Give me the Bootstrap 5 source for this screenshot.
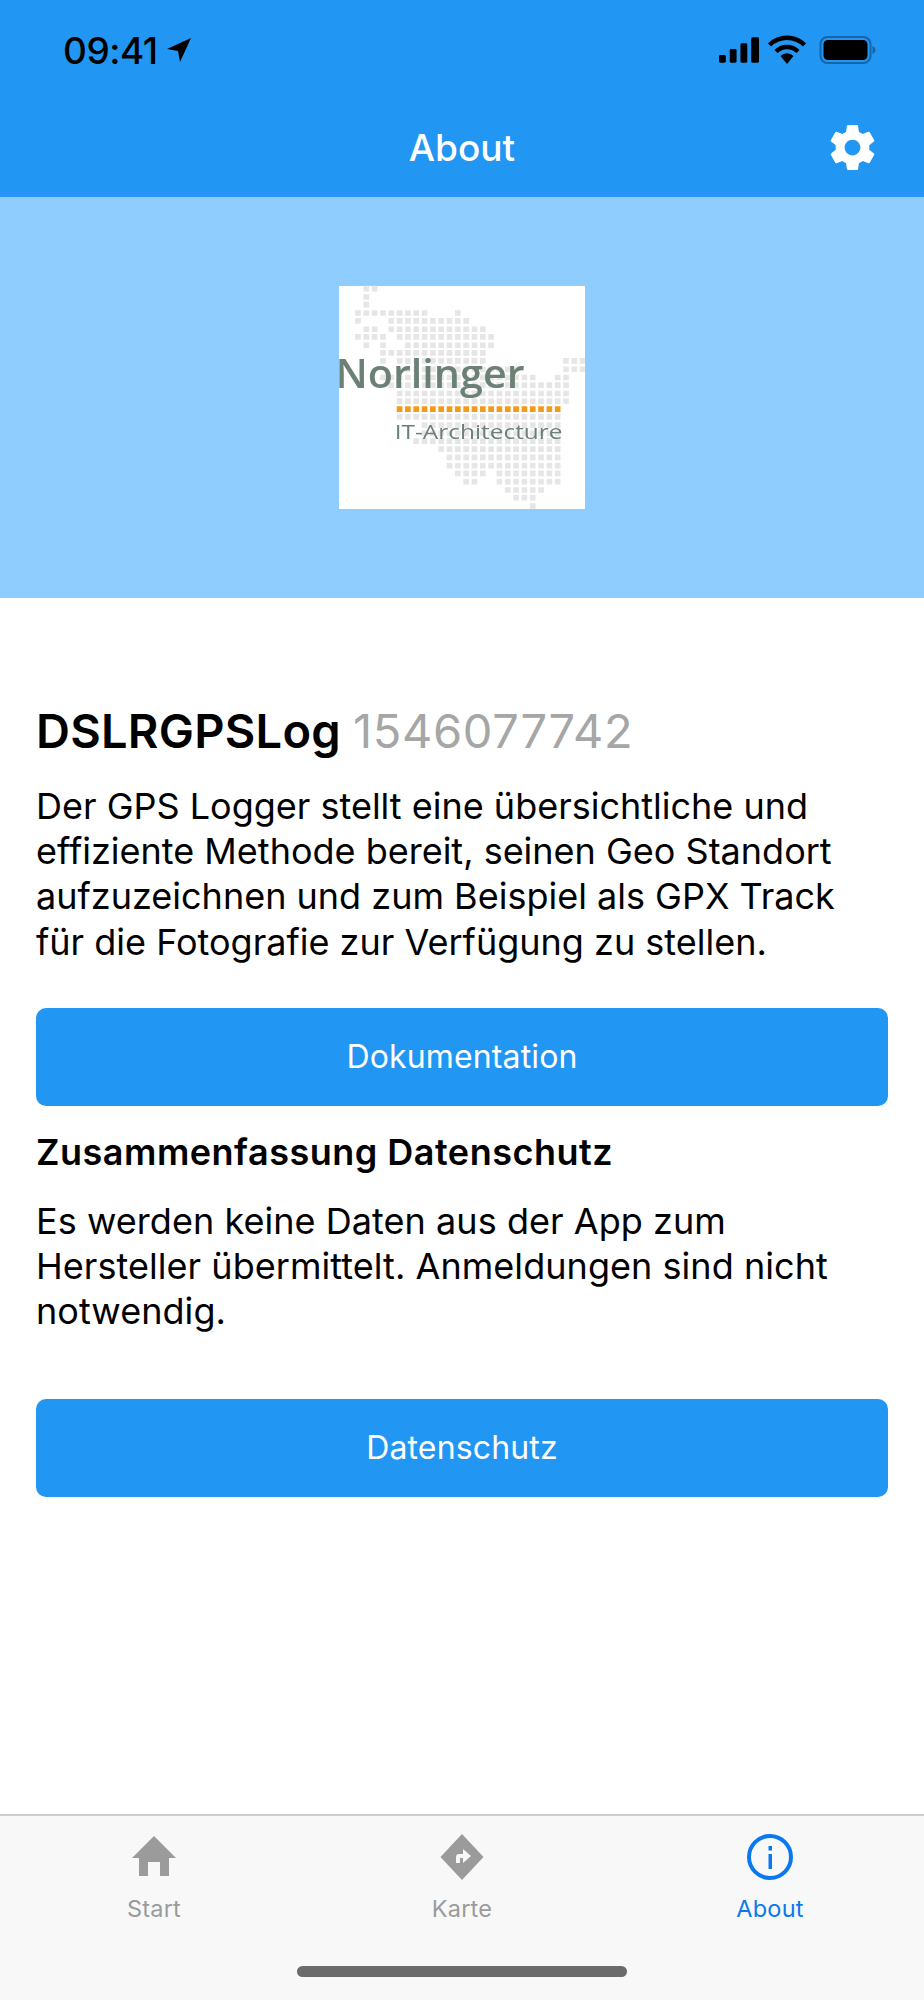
<!DOCTYPE html>
<html lang="de">
<head>
<meta charset="utf-8">
<title>About</title>
<link href="https://cdn.jsdelivr.net/npm/bootstrap@5.3.0/dist/css/bootstrap.min.css" rel="stylesheet">
<style>
html,body{height:100%}
body{font-family:Inter,"Liberation Sans",sans-serif;color:#000;background:#fff}
.app-head{background:#2196f3;height:197px;border-bottom:5px solid #2a94fb}
.status-row{height:97px;padding:3px 48px 0 63px}
.clock{font-size:37px;font-weight:500;letter-spacing:-.5px;line-height:1}
.head-row{height:95px;padding:5px 49px 0 49px}
.head-title{font-size:37px;font-weight:500;line-height:1;color:#fff}
.side-slot{width:45px}
.banner{background:#90cdff;height:401px}
.logo-box{width:246px;height:223px;background:#fff}
.logo-art{filter:blur(.5px);overflow:visible}
.content{padding:0 36px}
.app-title{font-size:47px;font-weight:600;line-height:54px;margin:0;padding-top:106px;letter-spacing:.25px}
.app-title span{font-weight:400;color:#a6a6a6;letter-spacing:.65px}
.copy{font-size:36px;line-height:45.200px;margin:0}
.intro{margin-top:26px}
.act-btn{background:#2196f3;border:0;border-radius:10px;color:#fff;height:98px;font-size:32px;letter-spacing:.15px;--bs-btn-hover-bg:#2196f3;--bs-btn-hover-color:#fff}
.gap-a{margin-top:43px}
.gap-b{margin-top:65px}
.sub-title{font-size:36px;font-weight:600;line-height:45px;margin:24px 0 0;letter-spacing:.5px}
.sub-copy{margin-top:24px;letter-spacing:.05px}
.tabbar{background:#f8f8f8;border-top:2px solid #cdcdcd;height:186px}
.tab-item{width:308px;padding-top:18px;color:#9b9b9b;font-size:23.500px;line-height:24px}
.tab-item.on{color:#0a78ee}
.tab-label{margin-top:17px;letter-spacing:.2px}
.home-bar{width:330px;height:11px;background:#6b6b6b;border-radius:6px;margin:45px auto 0}
</style>
</head>
<body class="d-flex flex-column">
<header class="app-head">
  <div class="status-row d-flex align-items-center justify-content-between">
    <div class="d-flex align-items-center gap-2">
      <span class="clock">09:41</span>
      <svg width="26" height="26" viewBox="0 0 26 26"><path d="M25 1 1 12l11 2 2 11z" fill="#000"/></svg>
    </div>
    <div class="d-flex align-items-center gap-2">
      <svg width="40" height="26" viewBox="0 0 41 26"><g fill="#000"><rect x="0" y="18" width="7" height="8" rx="1.5"/><rect x="11" y="12" width="7" height="14" rx="1.5"/><rect x="22" y="6" width="7" height="20" rx="1.5"/><rect x="33" y="0" width="8" height="26" rx="1.5"/></g></svg>
      <svg width="40" height="30" viewBox="0 0 40 30"><g fill="none" stroke="#000" stroke-width="4.5"><path d="M2.5 10a25 25 0 0 1 35 0"/><path d="M9 16.500a15.500 15.500 0 0 1 22 0"/></g><path d="M13.500 21a9 9 0 0 1 13 0L20 29z" fill="#000"/></svg>
      <svg class="ms-1" width="57" height="28" viewBox="0 0 56 28"><rect x="1" y="1" width="50" height="26" rx="7" fill="none" stroke="#1565a8" stroke-width="2"/><rect x="4" y="4" width="44" height="20" rx="4.500" fill="#000"/><path d="M53 10c2 1 3 2.500 3 4s-1 3-3 4z" fill="#1565a8"/></svg>
    </div>
  </div>
  <div class="head-row d-flex align-items-center justify-content-between">
    <div class="side-slot"></div>
    <div class="head-title">About</div>
    <svg class="side-slot" width="45" height="45" viewBox="2.500 2 19 20"><path fill="#fff" d="M19.430 12.980c.04-.32.070-.64.070-.98s-.03-.66-.07-.98l2.110-1.650c.19-.15.240-.42.120-.64l-2-3.460c-.12-.22-.39-.30-.61-.22l-2.490 1c-.52-.40-1.080-.73-1.690-.98l-.38-2.650A.488.488 0 0 0 14 2h-4c-.25 0-.46.180-.49.420l-.38 2.650c-.61.250-1.170.59-1.690.98l-2.490-1c-.23-.09-.49 0-.61.220l-2 3.460c-.13.220-.07.490.12.640l2.110 1.650c-.04.320-.07.650-.07.980s.03.660.07.980l-2.110 1.650c-.19.150-.24.420-.12.640l2 3.460c.12.220.39.300.61.220l2.490-1c.52.400 1.080.730 1.690.980l.38 2.650c.03.240.24.420.49.420h4c.25 0 .46-.18.49-.42l.38-2.650c.61-.25 1.170-.59 1.690-.98l2.490 1c.23.090.49 0 .61-.22l2-3.460c.12-.22.070-.49-.12-.64l-2.110-1.650zM12 15.500c-1.930 0-3.500-1.570-3.500-3.500s1.570-3.500 3.500-3.500 3.500 1.570 3.500 3.500-1.570 3.500-3.500 3.500z"/></svg>
  </div>
</header>

<section class="banner d-flex align-items-center justify-content-center">
  <div class="logo-box">
    <svg class="logo-art d-block" width="246" height="223" viewBox="57 47 738 670">
      <g fill="none" stroke="#e6e6e6" stroke-width="17" stroke-dasharray="17 8">
        <path d="M130 55H172M130 80H147M130 103H147M105 128H322M405 128H422M105 152H122M205 152H447M130 177H172M205 177H497M105 200H197M230 200H522M130 225H147M180 225H197M255 225H522M180 248H497M180 272H197M230 272H497M730 272H795M730 297H795M230 297H597M180 322H647M705 322H747M205 345H747M230 370H747M230 393H747M230 440H722M305 465H722M305 490H722M280 513H722M355 537H722M380 562H722M380 587H722M405 610H497M530 610H722M430 635H472M530 635H722M555 660H672M580 683H647M630 708H647"/>
      </g>
      <path d="M230 417H722" fill="none" stroke="#f39a1a" stroke-width="17" stroke-dasharray="17 8"/>
      <text x="46" y="352" font-family="'Open Sans',sans-serif" font-size="120" font-weight="600" fill="#6b8176" textLength="568" lengthAdjust="spacingAndGlyphs">Norlinger</text>
      <text x="224" y="507" font-family="'Open Sans',sans-serif" font-size="61" font-weight="500" fill="#6b8176" textLength="504" lengthAdjust="spacingAndGlyphs">IT-Architecture</text>
    </svg>
  </div>
</section>

<main class="content flex-grow-1">
  <h1 class="app-title">DSLRGPSLog <span>1546077742</span></h1>
  <p class="copy intro">Der GPS Logger stellt eine übersichtliche und effiziente Methode bereit, seinen Geo Standort aufzuzeichnen und zum Beispiel als GPX Track für die Fotografie zur Verfügung zu stellen.</p>
  <button type="button" class="btn act-btn w-100 d-block gap-a">Dokumentation</button>
  <h2 class="sub-title">Zusammenfassung Datenschutz</h2>
  <p class="copy sub-copy">Es werden keine Daten aus der App zum Hersteller übermittelt. Anmeldungen sind nicht notwendig.</p>
  <button type="button" class="btn act-btn w-100 d-block gap-b">Datenschutz</button>
</main>

<nav class="tabbar">
  <div class="d-flex">
    <div class="tab-item d-flex flex-column align-items-center">
      <svg width="46" height="46" viewBox="0 0 46 46"><path fill="#9b9b9b" d="M23 2 45 24H38V42H29V28H17V42H8V24H1z"/></svg>
      <span class="tab-label">Start</span>
    </div>
    <div class="tab-item d-flex flex-column align-items-center">
      <svg width="46" height="46" viewBox="0 0 46 46"><path fill="#9b9b9b" fill-rule="evenodd" d="M23 0 44.500 23 23 46 1.500 23zM24 15v5h-4a3 3 0 0 0-3 3v6h4v-5h3v5l8-7z"/></svg>
      <span class="tab-label">Karte</span>
    </div>
    <div class="tab-item on d-flex flex-column align-items-center">
      <svg width="46" height="46" viewBox="0 0 46 46"><circle cx="23" cy="23" r="21" fill="none" stroke="#0a78ee" stroke-width="4"/><rect x="21.500" y="20" width="3.500" height="15" fill="#0a78ee"/><rect x="21.500" y="12" width="3.500" height="4.500" fill="#0a78ee"/></svg>
      <span class="tab-label">About</span>
    </div>
  </div>
  <div class="home-bar"></div>
</nav>
<script src="https://cdn.jsdelivr.net/npm/bootstrap@5.3.0/dist/js/bootstrap.bundle.min.js"></script>
</body>
</html>
